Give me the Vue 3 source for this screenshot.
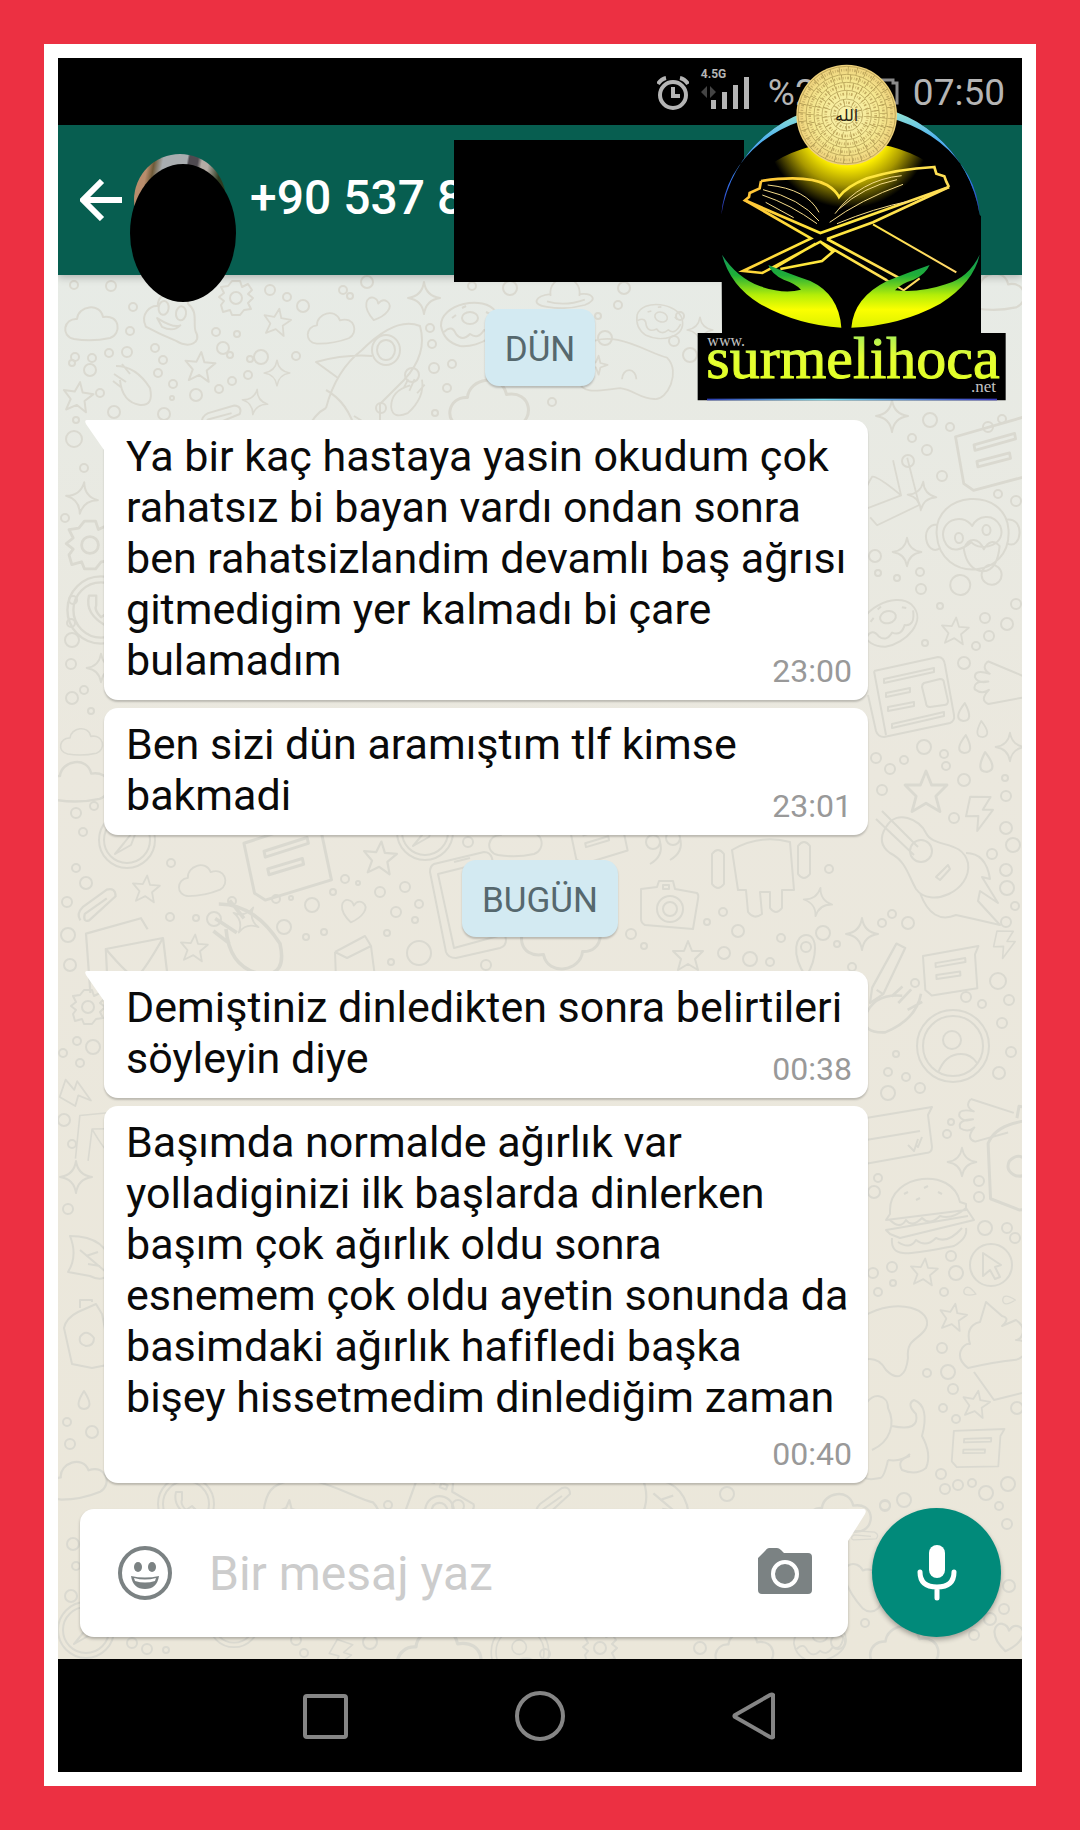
<script setup>
import { ref } from 'vue'

const draft = ref('')

const days = [
  {
    label: 'DÜN',
    messages: [
      {
        lines: [
          'Ya bir kaç hastaya yasin okudum çok',
          'rahatsız bi bayan vardı ondan sonra',
          'ben rahatsizlandim devamlı baş ağrısı',
          'gitmedigim yer kalmadı bi çare',
          'bulamadım',
        ],
        time: '23:00',
      },
      { lines: ['Ben sizi dün aramıştım tlf kimse', 'bakmadi'], time: '23:01' },
    ],
  },
  {
    label: 'BUGÜN',
    messages: [
      { lines: ['Demiştiniz dinledikten sonra belirtileri', 'söyleyin diye'], time: '00:38' },
      {
        lines: [
          'Başımda normalde ağırlık var',
          'yolladiginizi ilk başlarda dinlerken',
          'başım çok ağırlık oldu sonra',
          'esnemem çok oldu ayetin sonunda da',
          'basimdaki ağırlık hafifledi başka',
          'bişey hissetmedim dinlediğim zaman',
        ],
        time: '00:40',
        below: true,
      },
    ],
  },
]

// Wallpaper outlines, each centred on its own origin.
const shapes = {
  star: 'M0-15L4-5 15-5 7 3 10 14 0 8-10 14-7 3-15-5-4-5Z',
  spark: 'M0-16Q2-2 16 0Q2 2 0 16Q-2 2-16 0Q-2-2 0-16Z',
  heart: 'M0 14C-18 2-14-10-7-10Q-2-10 0-5Q3-12 9-10C18-6 12 6 0 14Z',
  cloud: 'M-18 15C-32 12-28-6-15-5C-14-18 8-22 11-7C28-10 30 10 18 14Q0 18-18 15Z',
  drop: 'M0-9Q11 8 0 9Q-11 8 0-9Z',
  bolt: 'M-12-14L8-18 3-4 13-6 2 18 0 3-12 6Z',
  note: 'M-28-16L28-22 24-14V20L-22 24-28 18ZM-16-8L14-11V-7L-16-4ZM-16 4L8 2V6L-16 8Z',
  gear: 'M-4-17H4L6-11 12-14 16-8 12-4 17 0 12 5 15 11 8 12 4 17H-4L-6 12-13 14-15 7-12 3-17-1-12-5-15-11-8-12ZM6 0A6 6 0 1 1-6 0A6 6 0 1 1 6 0Z',
  planet: 'M-16 0C-20-26 20-26 16 0M-16-2C-34 0-38 10-20 12Q0 16 22 10C38 4 30-4 16-2M-20 6Q0 12 22 4',
  donut: 'M-29 4C-30-18 14-28 26-10C38 10 10 26-10 24Q-26 20-29 4ZM-26 10Q-18 2-14 12Q-8 20 0 12Q8 18 14 8Q24 12 26-4M8-4A8 6 0 1 1-8-4A8 6 0 1 1 8-4ZM-18-4L-14-7M16-10L20-8M-8-14L-4-16',
  rocket: 'M-40 44Q-30 6-4-14Q30-48 54-38Q62-10 38 16L14 40V68L-12 52M-28 14L-50-2Q-20-10 6-8M34-14A14 15 0 1 1 6-14A14 15 0 1 1 34-14ZM29-14A9 10 0 1 1 11-14A9 10 0 1 1 29-14ZM-40 44Q-52 50-60 68M-40 26Q-18 38-10 68',
  poop: 'M-24 10C-32-2-22-12-15-12C-18-28 8-36 15-18C26-12 22 0 26 8C34 18 22 26 8 20Q-8 16-24 10ZM-4-11A5 7 0 1 1-14-11A5 7 0 1 1-4-11ZM14-8A5 7 0 1 1 4-8A5 7 0 1 1 14-8ZM-14 0Q4 8 10 4Q4 12-8 8Z',
  comet: 'M-24-20Q-4-20 10 2Q14 20 0 19Q-18 16-20-6M-26-12L-14-4M-27-5L-18 2M-18-22L-10-12',
  monkey: 'M-36-6C-36-50 36-50 36-6C36 44-36 44-36-6ZM-34-16C-54-18-48 16-34 8M34-16C54-18 48 16 34 8M0-12C-10-28-34-18-29 0C-24 16-10 10-2 4C8 16 34 8 28-10C22-24 6-22 0-12ZM-10-1A4 5 0 1 1-18-1A4 5 0 1 1-10-1ZM18-7A4 5 0 1 1 10-7A4 5 0 1 1 18-7ZM-10 10C-4-2 6 0 10 12Q18 0 26 10Q22 34 8 34Q-8 32-10 10ZM-6 46A10 10 0 1 1-26 46A10 10 0 1 1-6 46ZM26 38A10 10 0 1 1 6 38A10 10 0 1 1 26 38Z',
  paper: 'M-40-28L24-42Q30-42 31-34L40 16Q41 22 36 24L-30 38Q-36 38-38 32L-46-4M-40-28L-28 36M-30-20L20-31V-27L-30-16ZM-28-6L-4-11V-7L-28-2ZM-26 8L0 3V7L-26 12ZM-22 25L30 13V17L-22 29ZM10-16L26-20Q30-20 30-16L34 2Q34 6 30 6L16 8Q12 8 12 4L8-12Q8-15 10-16Z',
  guitar: 'M-54-44L-18-8M-60-36L-22 0M-50-28C-40-46-16-36-10-22C-2-6 26-16 32 8C36 36-6 54-20 34C-28 20-30 6-46-2Q-60-12-50-28ZM-4-4A11 11 0 1 1-26-4A11 11 0 1 1-4-4ZM0 22L12 10 14 14 4 25ZM30-2Q50-2 54 24L46 22 62 48 44 36 42 46 64 70 38 64 20 60Q-4 70-16 38',
  user: 'M36 0A36 36 0 1 1-36 0A36 36 0 1 1 36 0ZM30 0A30 30 0 1 1-30 0A30 30 0 1 1 30 0ZM8-6A9 9 0 1 1-10-6A9 9 0 1 1 8-6ZM-15 27Q-8 8 8 8Q18 8 24 17',
  burger: 'M-36-6C-36-42 26-50 34-14L40-12V-6L-40 4-36-2ZM-36 4Q-26 14-20 4Q-14 12-4 2Q4 10 14 0Q26 4 40-8L48 4-26 22-36 18-40 14 42 0M-34 22C-36 44-16 38 28 30Q42 22 40 12M-28 26Q-16 34-10 24Q0 32 10 22Q22 28 36 12M-22-22L-18-24M-2-28L2-30M12-24L16-22M-10-16L-6-18',
  cursor: 'M21 0A21 21 0 1 1-21 0A21 21 0 1 1 21 0ZM-8-12L10 0 4 2 9 12 4 14-1 5-8 11Z',
  cake: 'M-26 28C-42 16-30 2-24 4C-30-16-14-18-14-18L-8-38 8-24C18-22 8-14 8-14L22-20C34-12 28 0 22 0C40 0 32 20 20 20Q0 22-26 28ZM-20 32L0 60 40 50',
  ticket: 'M-54-20L30-34 26-26 30 6Q30 12 24 12L-54 26M-54 2L18-10M6 4L12 10 16-2M14 4L16 6 20-4',
  fork: 'M-34-8L10 2M-34-8Q-40 0-30 4Q-46 2-44 10Q-40 16-30 12Q-46 14-42 22Q-34 26-28 20Q-36 32-26 34L6 22',
  bottle: 'M-8-26L10-34 16-24 26 26 6 30-14 26-22-10Q-20-20-8-26ZM-6-30V-38H6V-36M8 0Q8 8 0 8Q-8 6-6-1Q0-10 8 0Z',
  blob: 'M-34-20C0-40 36-26 28-8C22 4 8 2 10 22C8 40 0 46-12 34Q-20 20-34 24',
  cat: 'M-30-28C-24-40-8-38-8-24C0-8-6 10-24 18M-4-6Q24 0 20-18Q10-28 18-32Q34-26 26 4Q36 22 30 36Q20 44 6 38Q0 28 14 24M-8 28Q-12 46-16 46Q-34 50-34 40M-8 28Q6 30 14 22',
  leaf: 'M-16-20Q22-20 26 12Q20 28 4 20L-18 16Q-8 0-16-20ZM-6-6L20 16M0 0L12-4M2 8L14 10',
  phone: 'M-30-42L20-54Q26-54 28-48L42 34Q42 40 36 42L-8 52Q-16 52-18 46L-34-34Q-34-40-30-42ZM-26-32L22-44 34 30-10 42ZM-10-44L6-48',
  robot: 'M-28-24Q0-40 30-32L34 16H22V34Q16 42 10 34V18H0L2 40Q-6 46-12 38L-14 16H-22ZM-48-20Q-42-28-36-20V10Q-42 18-48 10ZM38-28Q44-36 50-28V0Q44 8 38 0Z',
  camera: 'M-28-16L-12-18-10-24H4L6-16 28-12Q30-10 29-6L24 24-24 20Q-28 18-28 14ZM14 4A13 13 0 1 1-12 4A13 13 0 1 1 14 4ZM8 4A7 7 0 1 1-6 4A7 7 0 1 1 8 4ZM-6-20H0V-16H-6Z',
  mail: 'M-36 30L-40-24 10-38 16-28M-20 30L-22-10 30-20 36 30M-22-10Q0 16 6 16Q14 8 30-20',
  clip: 'M-16 14Q-20 8-14 2L8-14Q16-16 16-8L-8 14Q-14 16-12 8L8-6',
  quote: 'M-2-8A7 7 0 1 1-16-8A7 7 0 1 1-2-8Q2 6-12 14M18-12A7 7 0 1 1 4-12A7 7 0 1 1 18-12Q22 2 8 10',
  book: 'M-20-16L10-32 16-22 24 40M-20-16L-18 38M-20-16L-8-10 16-22M-6 10Q2 0 8 8Q6 18-2 22',
  pin: 'M0 24C-16 0-10-18 0-18C12-18 12 4 0 24ZM5-6A5 5 0 1 1-5-6A5 5 0 1 1 5-6Z',
  call: 'M28 0A28 28 0 1 1-28 0A28 28 0 1 1 28 0ZM23 0A23 23 0 1 1-23 0A23 23 0 1 1 23 0ZM-10-12Q-14 4 6 14L12 8 6 2 0 6Q-6 0-4-4L-4-12Z',
  pad: 'M-40-30C-10-50 30-20 50-16C66 0 50 32 36 30C20 30 14 20-2 18C-24 20-44 26-48 10C-52-6-48-24-40-30ZM-26-18L-24-10-16-8-24-5-26 3-29-5-36-8-29-11ZM0 8A8 10 0 1 1 16 8',
  clock: 'M28 0A28 28 0 1 1-28 0A28 28 0 1 1 28 0ZM23 0A23 23 0 1 1-23 0A23 23 0 1 1 23 0ZM-3 3L12-16 4 5-12 14Z',
  pencil: 'M-20 30L-18 16 4-24 12-20-8 22ZM-14 18L-8 22',
}

// [shape, x, y, rotation, scale]
const doodles = [
  ['cloud', 92, 324, 0, 1], ['poop', 171, 320, 8, 1], ['gear', 236, 298, 0, 1], ['star', 277, 322, 10, 0.9],
  ['cloud', 331, 328, -8, 0.9], ['heart', 377, 308, 15, 0.9], ['spark', 424, 298, 0, 1], ['donut', 470, 322, 0, 1],
  ['planet', 565, 296, 0, 0.9], ['rocket', 366, 364, 0, 1], ['star', 200, 367, 5, 1], ['comet', 140, 386, 0, 1],
  ['spark', 277, 373, 0, 0.8], ['star', 78, 397, 8, 1], ['spark', 255, 402, 10, 0.8], ['comet', 408, 404, 80, 0.9],
  ['cloud', 490, 405, 0, 1.5], ['pad', 622, 372, 0, 0.9], ['clip', 222, 416, 20, 1], ['donut', 660, 320, 20, 0.8],
  ['cloud', 996, 292, 0, 1.1], ['spark', 700, 330, 0, 0.8],
  ['spark', 892, 416, 0, 1], ['note', 998, 452, -10, 1.4], ['spark', 922, 496, 5, 0.9], ['monkey', 973, 538, -4, 1],
  ['spark', 907, 552, 0, 0.9], ['mail', 880, 490, 170, 0.9], ['donut', 889, 621, -15, 1], ['star', 955, 631, 5, 0.9],
  ['paper', 914, 699, 0, 1], ['fork', 1020, 675, 10, 1], ['drop', 964, 712, 5, 1], ['drop', 982, 729, -5, 0.9],
  ['drop', 965, 744, 5, 1], ['drop', 986, 762, -5, 1.1], ['spark', 1010, 747, 0, 0.9], ['star', 926, 792, 0, 1.4],
  ['bolt', 979, 813, 12, 1], ['guitar', 936, 855, 0, 1], ['bolt', 1004, 944, 12, 0.8],
  ['note', 952, 970, -4, 1], ['pencil', 892, 970, 0, 1.1], ['comet', 890, 1020, 100, 1.3], ['user', 953, 1046, 0, 1],
  ['ticket', 902, 1141, 0, 1], ['fork', 1004, 1110, 5, 1], ['spark', 962, 1162, 0, 0.9], ['bottle', 1018, 1164, 10, 1.5],
  ['burger', 926, 1216, 0, 1], ['cursor', 991, 1265, 0, 1], ['star', 924, 1272, 5, 0.9], ['star', 953, 1317, 10, 0.9],
  ['cake', 994, 1340, 0, 1], ['blob', 898, 1336, 0, 1], ['star', 976, 1404, 10, 0.9], ['cat', 896, 1432, 0, 1],
  ['note', 978, 1447, 4, 0.9], ['drop', 970, 1292, 110, 0.7], ['drop', 1009, 1300, 90, 0.7],
  ['spark', 82, 498, 8, 1], ['gear', 90, 545, 0, 1.4], ['call', 101, 610, 0, 1.2], ['spark', 101, 668, 0, 0.9],
  ['cloud', 82, 742, 0, 0.8], ['cloud', 78, 782, 0, 1.2], ['gear', 88, 1007, 0, 1], ['bolt', 76, 1094, -60, 0.9],
  ['mail', 108, 1140, 10, 0.8], ['spark', 76, 1177, 0, 1], ['leaf', 86, 1256, 0, 1], ['bottle', 86, 1338, 0, 1],
  ['drop', 84, 1400, 0, 1], ['cloud', 78, 1480, -10, 1.1],
  ['clock', 127, 840, 0, 1], ['note', 290, 858, -12, 1.5], ['cloud', 202, 880, -10, 0.9], ['star', 146, 889, 5, 0.9],
  ['clip', 98, 905, 0, 1.1], ['star', 380, 858, 5, 1.1], ['heart', 353, 910, 10, 0.9], ['mail', 130, 960, 0, 1.1],
  ['spark', 246, 920, 30, 0.9], ['comet', 262, 940, 0, 1.8], ['star', 194, 948, 5, 0.9], ['book', 355, 968, 0, 1],
  ['phone', 464, 906, 0, 1], ['clock', 425, 832, 0, 1], ['quote', 662, 850, 0, 1], ['camera', 669, 905, 0, 1],
  ['robot', 760, 874, 0, 1], ['spark', 818, 902, 10, 0.9], ['star', 688, 956, 0, 1], ['pin', 806, 953, 0, 1],
  ['cloud', 560, 944, 180, 1.5], ['spark', 862, 934, 0, 1], ['cloud', 516, 840, 0, 1], ['note', 600, 836, -12, 1],
  ['call', 186, 1504, 0, 1], ['pad', 318, 1520, 0, 1.1], ['camera', 440, 1506, 20, 1.1], ['clip', 554, 1502, 0, 1],
  ['leaf', 660, 1500, 0, 1.1], ['cloud', 840, 1514, 0, 1.2], ['clip', 864, 1536, 40, 0.7],
  ['clock', 86, 1630, 0, 1], ['call', 234, 1622, 0, 0.9], ['bolt', 340, 1654, 30, 0.8], ['cloud', 440, 1655, 0, 1.6],
  ['gear', 600, 1648, 0, 1], ['cloud', 745, 1650, 0, 1.1], ['donut', 820, 1640, 0, 0.9], ['cloud', 905, 1648, 0, 1.3],
  ['heart', 1008, 1636, 10, 1.1], ['user', 520, 1652, 0, 0.8], ['cloud', 866, 1586, 60, 1], ['drop', 114, 1364, 0, 1],
]

// [x, y, radius]
const dots = [
  [111, 286, 5], [133, 307, 4], [74, 285, 4], [216, 332, 4], [223, 348, 6], [237, 334, 3], [261, 357, 7], [296, 356, 4],
  [303, 306, 6], [287, 297, 4], [270, 290, 5], [75, 357, 4], [92, 358, 4], [109, 353, 4], [130, 331, 4], [127, 352, 5],
  [155, 348, 4], [163, 360, 4], [90, 370, 6], [72, 363, 3], [158, 373, 4], [173, 384, 4], [230, 355, 3], [250, 359, 3],
  [248, 375, 4], [232, 381, 4], [219, 389, 4], [196, 395, 6], [172, 398, 2], [114, 412, 6], [100, 393, 4], [164, 414, 6],
  [343, 290, 4], [350, 296, 3], [367, 282, 6], [430, 328, 4], [432, 344, 4], [434, 368, 5], [452, 364, 4], [412, 375, 7],
  [447, 388, 4], [381, 408, 5], [435, 413, 3], [472, 286, 4], [510, 288, 7], [605, 338, 7], [618, 305, 4], [598, 316, 3],
  [552, 402, 4], [624, 288, 6], [680, 316, 4], [674, 341, 5], [690, 355, 7],
  [930, 420, 7], [950, 427, 4], [988, 427, 5], [1002, 419, 4], [912, 438, 4], [927, 450, 5], [908, 461, 6], [942, 476, 5],
  [998, 494, 4], [1016, 501, 5], [875, 556, 6], [878, 573, 3], [897, 578, 3], [920, 572, 4], [921, 589, 5], [940, 606, 3],
  [1016, 604, 5], [985, 618, 5], [1007, 624, 6], [989, 636, 5], [976, 646, 4], [925, 643, 3], [964, 663, 6],
  [924, 747, 7], [944, 754, 4], [946, 766, 4], [876, 758, 5], [890, 769, 5], [904, 760, 4], [882, 790, 5], [964, 780, 6],
  [1005, 778, 3], [1006, 796, 5], [954, 818, 5], [1006, 828, 6], [1013, 845, 7], [992, 854, 5], [1006, 870, 6],
  [1007, 888, 7], [1015, 906, 4], [1006, 922, 5], [908, 923, 6], [892, 914, 4], [882, 923, 4],
  [915, 983, 4], [998, 981, 8], [966, 997, 5], [982, 1004, 4], [1009, 1000, 5], [1002, 1023, 5], [1011, 1052, 5],
  [999, 1073, 6], [896, 1054, 3], [888, 1072, 4], [906, 1077, 4], [920, 1088, 5], [888, 1093, 7], [951, 1122, 3],
  [947, 1134, 4], [979, 1181, 5], [979, 1197, 5], [878, 1178, 4], [874, 1192, 6], [985, 1228, 7], [1007, 1228, 5],
  [1015, 1238, 5], [951, 1256, 5], [956, 1273, 7], [892, 1267, 5], [873, 1273, 5], [893, 1283, 3], [878, 1292, 4],
  [944, 1292, 4], [942, 1348, 5], [927, 1373, 4], [948, 1372, 7], [953, 1389, 5], [943, 1408, 4], [956, 1419, 4],
  [941, 1474, 5], [958, 1485, 5], [945, 1489, 5], [972, 1483, 4], [986, 1493, 7], [1008, 1484, 7], [904, 1500, 7],
  [885, 1506, 5], [999, 1506, 4], [1017, 1408, 6], [1007, 1524, 5], [1009, 1586, 6], [1004, 1609, 5], [990, 1619, 6],
  [974, 1635, 5], [865, 1623, 4],
  [74, 439, 8], [76, 420, 3], [84, 468, 4], [65, 518, 4], [73, 600, 4], [71, 623, 4], [72, 640, 7], [71, 664, 5],
  [72, 698, 6], [84, 690, 4], [91, 711, 3], [76, 813, 5], [94, 806, 4], [83, 832, 4], [76, 868, 4], [86, 883, 6],
  [67, 902, 5], [68, 935, 7], [70, 965, 6], [77, 1041, 4], [93, 1047, 7], [63, 1053, 4], [80, 1063, 4], [64, 1120, 6],
  [72, 1144, 4], [68, 1209, 5], [67, 1422, 4], [70, 1444, 5], [92, 1432, 6],
  [171, 863, 4], [232, 901, 4], [170, 917, 4], [196, 918, 3], [214, 919, 7], [276, 899, 4], [291, 898, 2], [312, 905, 7],
  [345, 879, 4], [358, 883, 2], [333, 892, 3], [380, 892, 5], [405, 887, 5], [396, 912, 5], [419, 904, 4], [415, 920, 3],
  [324, 932, 3], [306, 937, 3], [284, 927, 7], [387, 933, 3], [391, 962, 3], [419, 953, 12], [468, 842, 5], [486, 965, 5],
  [631, 934, 5], [644, 946, 3], [707, 922, 3], [723, 912, 4], [738, 931, 6], [781, 938, 4], [823, 933, 7], [837, 944, 3],
  [724, 953, 6], [750, 959, 7], [770, 962, 4], [829, 869, 4], [852, 967, 4],
  [388, 1505, 4], [458, 1506, 6], [73, 1544, 6], [76, 1566, 4], [71, 1596, 6], [727, 1494, 7], [885, 1505, 5],
  [132, 1643, 5], [147, 1649, 5], [166, 1650, 3], [296, 1640, 5], [304, 1653, 4], [370, 1642, 7], [545, 1654, 5],
  [700, 1648, 6], [838, 1642, 7],
]

const rings = [27, 48, 74, 98, 122, 146]
</script>

<template>
  <div class="frame">
    <div class="screen">
      <div class="status">
        <svg class="alarm" viewBox="0 0 32 34" aria-hidden="true">
          <circle cx="16" cy="19" r="13" />
          <path d="M16 11v9h7M1 8Q4 3 9 2M31 8Q28 3 23 2" />
        </svg>
        <div class="signal">
          <span class="network">4.5G</span>
          <svg viewBox="0 0 50 34" aria-hidden="true">
            <path class="dim" d="M0 16l6-6v12zM15 16l-6-6v12z" />
            <path d="M10 24h5v9h-5zM21 16h5v17h-5zM32 9h5v24h-5zM43 1h5v32h-5z" />
          </svg>
        </div>
        <span class="charge">%2</span>
        <svg class="battery" viewBox="0 0 20 32" aria-hidden="true">
          <path d="M0 3h14v3h4v20h-4v3H0" />
        </svg>
        <span class="clock">07:50</span>
      </div>

      <header class="header">
        <button class="back" type="button" aria-label="Geri">
          <svg viewBox="0 0 42 42"><path d="M42 21H4M22 2L3 21l19 19" /></svg>
        </button>
        <div class="avatar"><span class="cover"></span></div>
        <h1 class="contact">+90 537 8</h1>
        <div class="redaction"></div>
      </header>

      <main class="chat">
        <svg class="wallpaper" viewBox="58 275 964 1384" preserveAspectRatio="xMidYMin slice" aria-hidden="true">
          <path
            v-for="([name, x, y, turn, size], i) in doodles"
            :key="'d' + i"
            :d="shapes[name]"
            :transform="`translate(${x} ${y}) rotate(${turn}) scale(${size})`"
          />
          <circle v-for="([x, y, r], i) in dots" :key="'c' + i" :cx="x" :cy="y" :r="r" />
        </svg>

        <section v-for="day in days" :key="day.label" class="day">
          <h2 class="chip">{{ day.label }}</h2>
          <div class="thread">
            <article v-for="(message, m) in day.messages" :key="message.time" class="bubble" :class="{ below: message.below, first: m === 0 }">
              <svg v-if="m === 0" class="tail" viewBox="0 0 22 32" aria-hidden="true"><path d="M22 0H3Q0 0 2 4L20 30V32H22z" /></svg>
              <template v-for="(line, n) in message.lines" :key="n"><br v-if="n" />{{ line }}</template>
              <time class="stamp">{{ message.time }}</time>
            </article>
          </div>
        </section>

        <form class="composer" @submit.prevent>
          <div class="field">
            <button class="icon" type="button" aria-label="Emoji">
              <svg viewBox="0 0 54 54">
                <circle cx="27" cy="27" r="25" fill="none" stroke="#7b8283" stroke-width="4" />
                <ellipse cx="20" cy="21" rx="4" ry="5" />
                <ellipse cx="34" cy="21" rx="4" ry="5" />
                <path d="M13 30Q27 33 41 30Q39 43 27 43T13 30z" />
                <path d="M16 32Q27 35 38 32L37 35Q27 38 17 35z" fill="#fff" />
              </svg>
            </button>
            <input v-model="draft" class="entry" type="text" placeholder="Bir mesaj yaz" aria-label="Bir mesaj yaz" />
            <button class="icon" type="button" aria-label="Kamera">
              <svg viewBox="0 0 54 54">
                <path d="M0 12L7 5Q9 2 11 2h8q2 0 4 2l3 3h24q4 0 4 4v33q0 4-4 4H4q-4 0-4-4z" />
                <circle cx="27" cy="28" r="12" fill="none" stroke="#fff" stroke-width="4" />
              </svg>
            </button>
            <svg class="notch" viewBox="0 0 22 34" aria-hidden="true"><path d="M0 0H18Q21 1 19 5L2 32V34H0z" /></svg>
          </div>
          <button class="mic" type="button" aria-label="Sesli mesaj">
            <svg viewBox="0 0 40 56">
              <rect x="12" y="0" width="16" height="33" rx="8" />
              <path d="M3 27Q3 42 20 42T37 27M20 42v11" fill="none" stroke="#fff" stroke-width="5" stroke-linecap="round" />
            </svg>
          </button>
        </form>
      </main>

      <nav class="navbar">
        <button type="button" aria-label="Son uygulamalar">
          <svg viewBox="0 0 50 50"><rect x="4" y="5" width="41" height="41" rx="2" /></svg>
        </button>
        <button type="button" aria-label="Ana ekran">
          <svg viewBox="0 0 50 50"><circle cx="25" cy="25" r="23" /></svg>
        </button>
        <button type="button" aria-label="Geri dön">
          <svg viewBox="0 0 50 50"><path d="M44 4v42q-1 1-3 0L6 26q-1-1 0-2L41 4q2-1 3 0z" /></svg>
        </button>
      </nav>

      <svg class="logo" viewBox="170 70 930 1014" role="img" aria-label="www.surmelihoca.net">
        <defs>
          <linearGradient id="arc" x1="0" y1="0" x2="0" y2="1">
            <stop offset="0" stop-color="#a8f0c8" />
            <stop offset="0.3" stop-color="#55b8ee" />
            <stop offset="0.7" stop-color="#3474ee" />
            <stop offset="1" stop-color="#2b2ba8" />
          </linearGradient>
          <radialGradient id="glow" gradientUnits="userSpaceOnUse" cx="625" cy="255" r="250">
            <stop offset="0.5" stop-color="#fff000" />
            <stop offset="0.72" stop-color="#a89800" />
            <stop offset="1" stop-color="#000" />
          </radialGradient>
          <radialGradient id="disc">
            <stop offset="0" stop-color="#f9f3ae" />
            <stop offset="0.7" stop-color="#f5e68e" />
            <stop offset="1" stop-color="#eed07a" />
          </radialGradient>
          <linearGradient id="gold" gradientUnits="userSpaceOnUse" x1="310" y1="380" x2="900" y2="750">
            <stop offset="0" stop-color="#ffbd36" />
            <stop offset="0.45" stop-color="#ffe83b" />
            <stop offset="1" stop-color="#ffd76a" />
          </linearGradient>
          <linearGradient id="hand" gradientUnits="userSpaceOnUse" x1="0" y1="645" x2="0" y2="865">
            <stop offset="0" stop-color="#12965c" />
            <stop offset="0.28" stop-color="#1fae38" />
            <stop offset="0.55" stop-color="#b4ee08" />
            <stop offset="0.75" stop-color="#fbff00" />
            <stop offset="1" stop-color="#dcf000" />
          </linearGradient>
          <linearGradient id="name" x1="0" y1="0" x2="0" y2="1">
            <stop offset="0.1" stop-color="#a4ef5a" />
            <stop offset="0.5" stop-color="#e6ff32" />
            <stop offset="1" stop-color="#dfff20" />
          </linearGradient>
          <linearGradient id="rule">
            <stop offset="0" stop-color="#2b3bb0" />
            <stop offset="0.4" stop-color="#74dcf0" />
            <stop offset="1" stop-color="#3a3ac0" />
          </linearGradient>
        </defs>
        <path d="M243 525A392 392 0 0 1 1018 525L1022 530V880H1096V1082H172V880H245Z" />
        <path d="M262 525A388 318 0 0 1 1000 525Z" fill="url(#glow)" />
        <path d="M243 525A392 392 0 0 1 1018 525A388 322 0 0 0 243 525Z" fill="url(#arc)" />
        <g class="sun">
          <circle cx="619" cy="226" r="151" fill="url(#disc)" />
          <circle v-for="r in rings" :key="r" cx="619" cy="226" :r="r" class="ring" />
          <circle v-for="r in rings.slice(1)" :key="'t' + r" cx="619" cy="226" :r="r - 12" class="ticks" :stroke-dashoffset="r" />
          <circle v-for="r in rings.slice(1)" :key="'w' + r" cx="619" cy="226" :r="r - 11" class="script" :stroke-dashoffset="r * 2" />
          <text x="619" y="244" class="center">الله</text>
        </g>
        <g class="book">
          <path class="thick" d="M362 424Q500 404 560 436Q586 452 596 472Q620 440 680 416Q770 388 882 382L888 402 912 410 918 426 926 442M362 424L358 446 328 460 326 472 314 482L540 580 926 442" />
          <path class="thick" d="M314 482L512 596 308 694 366 700 540 606 740 722M560 598L698 548 926 442M560 598L790 722M540 606L578 636 545 664 420 688M400 686L526 612" />
          <path class="mid" d="M698 554L948 698M740 722L790 752 838 716" />
          <path class="thin" d="M382 436Q500 448 536 518M368 450Q480 476 536 544M366 466Q450 494 530 552M376 488L460 534M584 522Q660 420 784 408M596 508Q670 440 770 420M568 548Q660 480 788 434M590 552Q700 506 808 484" />
        </g>
        <g fill="url(#hand)">
          <path d="M245 645Q290 714 360 740Q430 764 482 750Q466 732 430 720Q394 704 384 676Q440 700 510 724Q596 764 603 864Q470 856 358 792Q270 738 245 645Z" />
          <path d="M1018 645Q985 714 916 734Q840 760 764 752Q780 732 820 720Q856 704 868 676Q800 700 740 724Q640 774 633 864Q780 858 900 792Q1000 728 1018 645Z" />
        </g>
        <text x="201" y="920" class="www">www.</text>
        <text x="198" y="1015" class="name">surmelihoca</text>
        <text x="992" y="1058" class="net">.net</text>
        <rect x="200" y="1077" width="870" height="5" fill="url(#rule)" />
      </svg>
    </div>
  </div>
</template>

<style>
body {
  margin: 0;
}
</style>

<style scoped>
.frame {
  box-sizing: border-box;
  min-height: 100vh;
  display: flex;
  border: 44px solid #ec3042;
  padding: 14px;
  background: #fff;
  font-family: Roboto, "Liberation Sans", sans-serif;
  font-variant-ligatures: none;
}
.screen {
  position: relative;
  flex: 1;
  min-width: 0;
  display: flex;
  flex-direction: column;
}
button {
  padding: 0;
  border: 0;
  background: none;
  display: flex;
  align-items: center;
  justify-content: center;
}
svg {
  display: block;
}

.status {
  box-sizing: border-box;
  height: 67px;
  padding: 2px 17px 0 0;
  background: #000;
  color: #b5b5b5;
  display: flex;
  align-items: center;
  justify-content: flex-end;
  font-size: 37px;
}
.alarm {
  width: 32px;
  height: 34px;
  margin-right: 12px;
  fill: none;
  stroke: #b5b5b5;
  stroke-width: 4;
}
.signal {
  height: 50px;
  margin-right: 17px;
}
.signal svg {
  width: 50px;
  height: 34px;
  fill: #b5b5b5;
}
.signal .dim {
  fill: #444;
}
.network {
  display: block;
  height: 8px;
  line-height: 12px;
  font-size: 12px;
  font-weight: 700;
}
.charge {
  width: 97px;
}
.battery {
  width: 20px;
  height: 32px;
  margin: 0 14px;
  fill: none;
  stroke: #8a8a8a;
  stroke-width: 3;
}

.header {
  position: relative;
  z-index: 1;
  height: 150px;
  background: #075e50;
  box-shadow: 0 2px 8px rgba(0, 0, 0, 0.25);
  clip-path: inset(0 0 -40px);
  display: flex;
  align-items: center;
}
.back {
  margin-left: 22px;
}
.back svg {
  width: 42px;
  height: 42px;
  fill: none;
  stroke: #fff;
  stroke-width: 6;
}
.avatar {
  position: relative;
  width: 92px;
  height: 92px;
  margin-left: 12px;
  border-radius: 50%;
  background: linear-gradient(100deg, #b98d6c 0 14%, #6e5a38 20%, #a9adb0 28% 50%, #4f4a50 52% 60%, #b5aca5 64% 70%, #2d3a20 82%);
}
.cover {
  position: absolute;
  top: 10px;
  left: -4px;
  width: 106px;
  height: 138px;
  border-radius: 50%;
  background: #000;
}
.contact {
  margin: 0 0 6px 24px;
  color: #fff;
  font-size: 48px;
  font-weight: 500;
  white-space: nowrap;
}
.redaction {
  position: absolute;
  top: 15px;
  left: 396px;
  width: 290px;
  height: 142px;
  background: #000;
}

.chat {
  position: relative;
  flex: 1;
  display: flex;
  flex-direction: column;
  padding: 34px 0 22px;
  background: linear-gradient(#e7ebe6, #ebe8de 35%, #ebe7da);
}
.wallpaper {
  position: absolute;
  inset: 0;
  width: 100%;
  height: 100%;
  fill: none;
  stroke: #dad9d0;
  stroke-width: 2;
  stroke-linejoin: round;
}
.day {
  position: relative;
  display: flex;
  flex-direction: column;
  align-items: center;
  margin-bottom: 25px;
}
.chip {
  margin: 0 0 34px;
  padding: 4px 20px 0;
  border-radius: 14px;
  background: #d3eaf2;
  box-shadow: 0 2px 2px rgba(0, 0, 0, 0.2);
  color: #56686e;
  font-size: 35px;
  font-weight: 400;
  line-height: 73px;
}
.thread {
  align-self: stretch;
  display: flex;
  flex-direction: column;
  gap: 8px;
  margin: 0 154px 0 46px;
}
.bubble {
  position: relative;
  display: flow-root;
  padding: 11px 16px 4px 22px;
  border-radius: 14px;
  background: #fff;
  box-shadow: 0 2px 2px rgba(0, 0, 0, 0.2);
  color: #0a0a0a;
  font-size: 43px;
  line-height: 51px;
  white-space: nowrap;
}
.bubble.first {
  border-top-left-radius: 0;
}
.tail {
  position: absolute;
  top: 0;
  left: -20px;
  width: 22px;
  height: 32px;
  fill: #fff;
}
.stamp {
  float: right;
  margin-top: 12px;
  color: #999;
  font-size: 32px;
  line-height: 49px;
}
.below .stamp {
  margin-top: 7px;
}

.composer {
  position: relative;
  margin: auto 21px 0 22px;
  display: flex;
  align-items: center;
  gap: 24px;
}
.field {
  position: relative;
  flex: 1;
  min-width: 0;
  height: 128px;
  box-sizing: border-box;
  padding: 0 36px 0 38px;
  border-radius: 14px 0 14px 14px;
  background: #fff;
  box-shadow: 0 2px 3px rgba(0, 0, 0, 0.25);
  display: flex;
  align-items: center;
}
.icon svg {
  width: 54px;
  height: 54px;
  fill: #7b8283;
}
.entry {
  flex: 1;
  min-width: 0;
  margin-left: 37px;
  padding: 2px 0 0;
  border: 0;
  outline: 0;
  background: none;
  color: #0a0a0a;
  font-family: inherit;
  font-size: 48px;
}
.entry::placeholder {
  color: #ccc;
  opacity: 1;
}
.notch {
  position: absolute;
  top: 0;
  right: -20px;
  width: 22px;
  height: 34px;
  fill: #fff;
}
.mic {
  width: 129px;
  height: 129px;
  border-radius: 50%;
  background: #018a7a;
  box-shadow: 0 3px 5px rgba(0, 0, 0, 0.3);
}
.mic svg {
  width: 40px;
  height: 56px;
  fill: #fff;
}

.navbar {
  height: 113px;
  background: #000;
  display: flex;
  align-items: center;
  justify-content: center;
  gap: 164px;
}
.navbar svg {
  width: 50px;
  height: 50px;
  fill: none;
  stroke: #858585;
  stroke-width: 4;
}

.logo {
  position: absolute;
  z-index: 2;
  top: 5px;
  right: 15px;
  width: 310px;
  height: 338px;
}
.ring {
  fill: none;
  stroke: #a8924a;
  stroke-width: 2;
}
.ticks {
  fill: none;
  stroke: #a8924a;
  stroke-width: 22;
  stroke-dasharray: 2 24;
}
.script {
  fill: none;
  stroke: #c4ad62;
  stroke-width: 8;
  stroke-dasharray: 3 5 2 4 5 7;
}
.center {
  fill: #2a2410;
  font-family: "DejaVu Sans", sans-serif;
  font-size: 48px;
  text-anchor: middle;
}
.book {
  fill: none;
  stroke: url(#gold);
}
.thick {
  stroke-width: 8;
}
.mid {
  stroke-width: 6;
}
.thin {
  stroke: #f5dc8a;
  stroke-width: 3;
}
.www,
.name,
.net {
  font-family: "Liberation Serif", serif;
  fill: #c4c4c4;
  font-size: 51px;
}
.www {
  font-size: 48px;
}
.name {
  fill: url(#name);
  stroke: url(#name);
  stroke-width: 3;
  font-size: 180px;
}
</style>
